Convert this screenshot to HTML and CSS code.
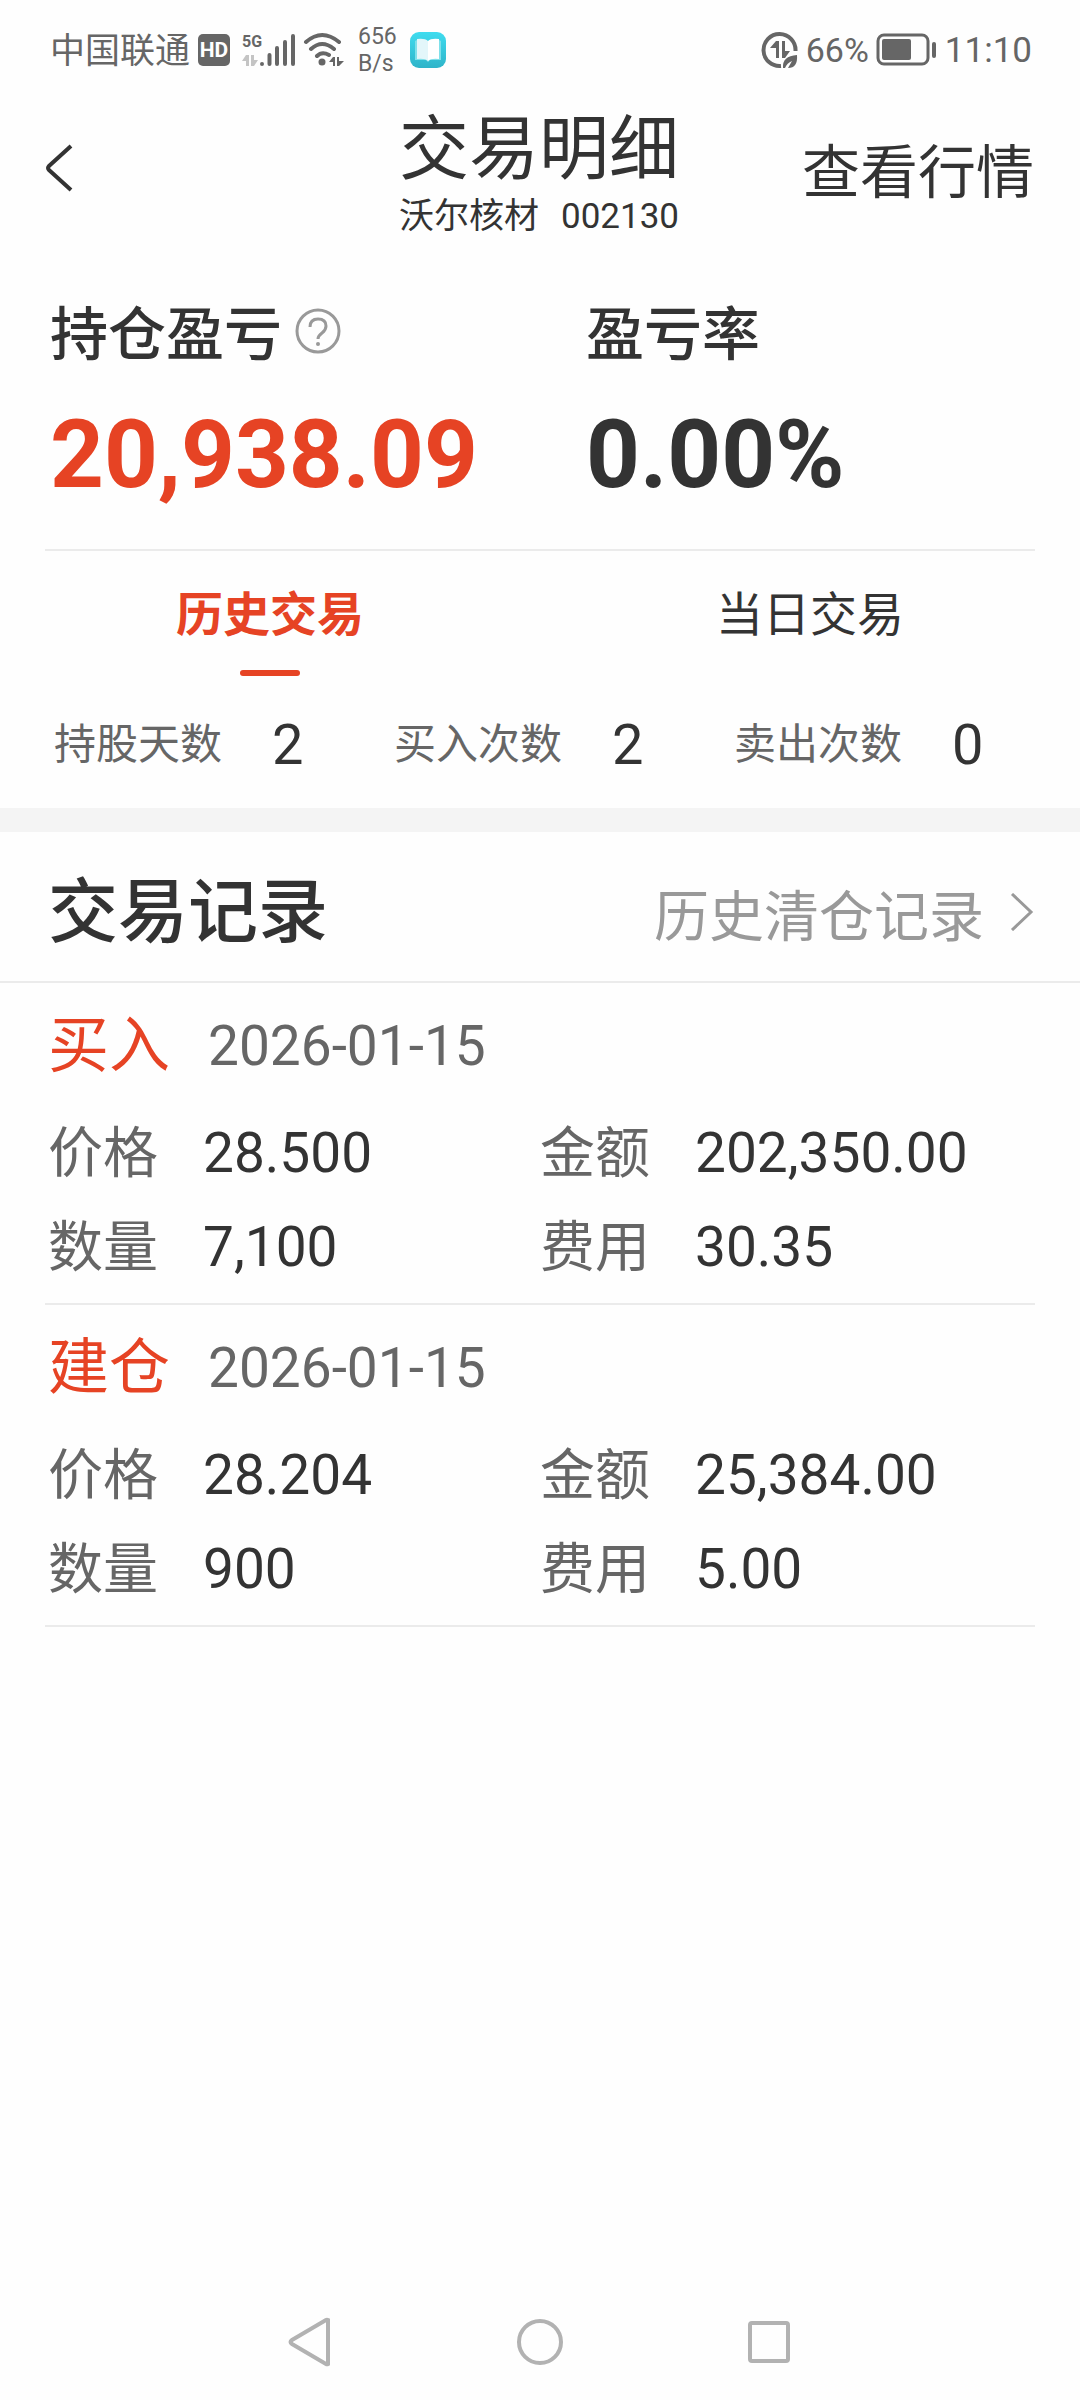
FILE: index.html
```
<!DOCTYPE html>
<html lang="zh-CN">
<head>
	<meta charset="UTF-8">
	<meta name="viewport" content="width=device-width, initial-scale=1.0">
	<title>交易明细</title>
	<link rel="stylesheet" href="styles.css">
</head>

<body>
	<div class="page">
		<!-- 状态栏 -->
		<div class="status-bar">
			<div class="status-left">
				<span class="carrier">中国联通</span>
				<span class="hd">HD</span>
				<div class="signal">
					<div class="network">
						<span>5G</span>
						<svg width="16" height="13" viewBox="0 0 16 13" fill="#c4c4c4"><path d="M4 1h3v11H4V7H0zM9 1h3v5h4l-4 6H9z"/></svg>
					</div>
					<svg width="36" height="34" viewBox="0 0 36 34" stroke="#666" stroke-width="4" stroke-linecap="round"><path d="M3 31v0M10.500 31V22M18 31V15M26 31V9M34 31V3"/></svg>
				</div>
				<svg class="wifi" width="42" height="36" viewBox="0 0 42 36" fill="none" stroke="#666" stroke-width="4" stroke-linecap="round">
					<path d="M3 10Q19-4 36 10M8 17Q19 7 31 17M14 24Q19 19 26 23"/>
					<circle cx="19" cy="30" r="3.500" fill="#666" stroke="none"/>
					<path d="M30 25h2v9h-2v-4h-4zM34 25h2v4h5l-5 5h-2z" fill="#666" stroke="none"/>
				</svg>
				<div class="speed"><span>656</span><span>B/s</span></div>
				<svg width="36" height="36" viewBox="0 0 36 36">
					<defs>
						<linearGradient id="book" x1="0" y1="0" x2="0" y2="1">
							<stop offset="0" stop-color="#3fdcef"/>
							<stop offset="1" stop-color="#2fb4c9"/>
						</linearGradient>
					</defs>
					<rect width="36" height="36" rx="9" fill="url(#book)"/>
					<path d="M5 9q1-1 3-1v18h9l1 2 1-2h9V8q2 0 3 1v19H20l-2 2-2-2H5z" fill="#7fe0ea"/>
					<path d="M7 7q8-1 11 2v20q-3-3-11-2z" fill="#e3f6fa"/>
					<path d="M29 7q-8-1-11 2v20q3-3 11-2z" fill="#fff"/>
				</svg>
			</div>
			<div class="status-right">
				<svg width="38" height="38" viewBox="0 0 38 38" fill="none" stroke="#666">
					<path d="M34.500 20A16 16 0 1 0 20 35" stroke-width="4"/>
					<path d="M15 10h3v17h-3V17H9zM21 10h3v10h5l-5 7h-3z" fill="#666" stroke="none"/>
					<path d="M22 37q-1-12 14-13 1 13-9 13l4-7q-5 2-7 7z" fill="#666" stroke="none"/>
				</svg>
				<span class="percent">66%</span>
				<svg class="battery" width="62" height="34" viewBox="0 0 62 34">
					<rect x="2" y="2" width="50" height="29" rx="6" fill="none" stroke="#666" stroke-width="3"/>
					<rect x="6" y="6" width="29" height="21" rx="2" fill="#666"/>
					<rect x="56" y="9" width="4" height="16" rx="2" fill="#666"/>
				</svg>
				<span>11:10</span>
			</div>
		</div>

		<!-- 顶部标题 -->
		<header class="header">
			<button class="back" type="button" aria-label="返回">
				<svg width="30" height="50" viewBox="0 0 30 50" fill="none" stroke="#333" stroke-width="4"><path d="M27 3L5 23q-2 2 0 4L27 47"/></svg>
			</button>
			<div class="title">
				<h1>交易明细</h1>
				<p><span>沃尔核材</span><span>002130</span></p>
			</div>
			<a class="quote" href="#quote">查看行情</a>
		</header>

		<!-- 盈亏 -->
		<section class="profit">
			<div class="profit-item">
				<h2>持仓盈亏
					<button class="help" type="button" aria-label="说明">
						<svg width="46" height="46" viewBox="0 0 46 46" fill="none" stroke="#999" stroke-width="3">
							<circle cx="23" cy="23" r="21"/>
							<path d="M15 19q0-8 8-8t8 7q0 4-4 7t-4 6"/>
							<circle cx="23" cy="36" r="2" fill="#999" stroke="none"/>
						</svg>
					</button>
				</h2>
				<strong class="up">20,938.09</strong>
			</div>
			<div class="profit-item">
				<h2>盈亏率</h2>
				<strong>0.00%</strong>
			</div>
		</section>

		<nav class="tabs">
			<button class="tab active" type="button">历史交易</button>
			<button class="tab" type="button">当日交易</button>
		</nav>

		<dl class="counts">
			<div><dt>持股天数</dt><dd>2</dd></div>
			<div><dt>买入次数</dt><dd>2</dd></div>
			<div><dt>卖出次数</dt><dd>0</dd></div>
		</dl>

		<!-- 交易记录 -->
		<section class="records">
			<div class="records-head">
				<h2>交易记录</h2>
				<a href="#history">历史清仓记录
					<svg width="24" height="38" viewBox="0 0 24 38" fill="none" stroke="#999" stroke-width="3"><path d="M2 1l19 18L2 37"/></svg>
				</a>
			</div>
			<article class="record">
				<h3><span class="up">买入</span><time datetime="2026-01-15">2026-01-15</time></h3>
				<dl>
					<dt>价格</dt><dd>28.500</dd>
					<dt>金额</dt><dd>202,350.00</dd>
					<dt>数量</dt><dd>7,100</dd>
					<dt>费用</dt><dd>30.35</dd>
				</dl>
			</article>
			<article class="record">
				<h3><span class="up">建仓</span><time datetime="2026-01-15">2026-01-15</time></h3>
				<dl>
					<dt>价格</dt><dd>28.204</dd>
					<dt>金额</dt><dd>25,384.00</dd>
					<dt>数量</dt><dd>900</dd>
					<dt>费用</dt><dd>5.00</dd>
				</dl>
			</article>
		</section>

		<!-- 系统导航键 -->
		<nav class="system-nav">
			<button type="button" aria-label="返回">
				<svg width="50" height="50" viewBox="0 0 50 50"><path d="M43 3v44a2 2 0 0 1-2 0L7 27q-3-2 0-4L41 3a2 2 0 0 1 2 0z"/></svg>
			</button>
			<button type="button" aria-label="主屏幕">
				<svg width="50" height="50" viewBox="0 0 50 50"><circle cx="25" cy="25" r="21"/></svg>
			</button>
			<button type="button" aria-label="最近任务">
				<svg width="50" height="50" viewBox="0 0 50 50"><rect x="5" y="6" width="38" height="38" rx="2"/></svg>
			</button>
		</nav>
	</div>
</body>

</html>
```
FILE: styles.css
```
* {
	box-sizing: border-box;
	margin: 0;
	padding: 0;
}
body {
	font-family: Roboto, "Noto Sans CJK SC", sans-serif;
	background: #fefefe;
	color: #333;
}
button {
	border: none;
	background: none;
	font-family: inherit;
	color: inherit;
	cursor: pointer;
}
a {
	color: inherit;
	text-decoration: none;
}
svg {
	display: block;
	flex: none;
}
.page {
	display: flex;
	flex-direction: column;
	min-height: 100vh;
}
.up {
	color: #e64324;
}

/* 状态栏 */
.status-bar {
	display: flex;
	justify-content: space-between;
	align-items: center;
	height: 100px;
	padding: 0 48px 0 50px;
	color: #666;
	font-size: 35px;
}
.status-left,
.status-right {
	display: flex;
	align-items: center;
}
.status-left {
	gap: 8px;
}
.carrier {
	padding-top: 4px;
	line-height: 40px;
}
.hd {
	width: 32px;
	border-radius: 5px;
	background: #666;
	color: #fff;
	font-size: 21px;
	font-weight: bold;
	line-height: 32px;
	text-align: center;
}
.signal {
	display: flex;
	margin-left: 4px;
}
.network {
	display: flex;
	flex-direction: column;
	gap: 3px;
	width: 17px;
	font: bold 16px/18px Roboto, sans-serif;
}
.speed {
	display: flex;
	flex-direction: column;
	margin: 0 5px;
	font-size: 23px;
	line-height: 27px;
}
.status-right {
	gap: 7px;
}
.percent {
	font-size: 34px;
}

/* 顶部标题 */
.header {
	display: grid;
	grid-template-columns: 1fr auto 1fr;
	align-items: center;
	padding: 0 46px 0 44px;
}
.back {
	justify-self: start;
	padding-bottom: 6px;
}
.title {
	padding-top: 8px;
}
.title h1 {
	font-size: 70px;
	font-weight: normal;
	line-height: 84px;
}
.title p {
	display: flex;
	justify-content: space-between;
	font-size: 35px;
	line-height: 50px;
}
.quote {
	justify-self: end;
	padding-bottom: 6px;
	font-size: 58px;
}

/* 盈亏 */
.profit {
	display: grid;
	grid-template-columns: 536px 1fr;
	margin: 0 45px;
	padding: 53px 5px 46px;
	border-bottom: 2px solid #ebebeb;
}
.profit h2 {
	display: flex;
	align-items: center;
	gap: 13px;
	font-size: 58px;
	font-weight: 500;
	line-height: 80px;
}
.help {
	padding-bottom: 8px;
}
.profit strong {
	display: block;
	margin-top: 32px;
	font-size: 94px;
	line-height: 96px;
}

/* 历史 / 当日切换 */
.tabs {
	display: flex;
}
.tab {
	display: flex;
	flex: 1;
	flex-direction: column;
	align-items: center;
	padding-top: 30px;
	font-size: 47px;
	line-height: 68px;
}
.tab::after {
	content: "";
	width: 60px;
	height: 6px;
	margin-top: 21px;
	border-radius: 3px;
}
.active {
	color: #e64324;
	font-weight: bold;
}
.active::after {
	background: #e64324;
}
.counts {
	display: grid;
	grid-template-columns: repeat(3, 1fr);
	padding: 33px 6px 27px 54px;
	border-bottom: 24px solid #f4f4f4;
}
.counts div {
	display: flex;
	align-items: center;
	gap: 50px;
	line-height: 72px;
}
.counts dt {
	color: #666;
	font-size: 42px;
}
.counts dd {
	font-size: 56px;
}

/* 交易记录 */
.records-head {
	display: flex;
	justify-content: space-between;
	align-items: center;
	height: 151px;
	padding: 0 46px 0 48px;
	border-bottom: 2px solid #ebebeb;
}
.records-head h2 {
	font-size: 70px;
	font-weight: 500;
}
.records-head a {
	display: flex;
	align-items: center;
	gap: 26px;
	padding-top: 10px;
	color: #999;
	font-size: 55px;
}
.record {
	margin: 0 45px;
	padding: 22px 3px 9px;
	border-bottom: 2px solid #ebebeb;
}
.record h3 {
	display: flex;
	align-items: center;
	gap: 38px;
	font-size: 61px;
	font-weight: normal;
	line-height: 82px;
}
.record time {
	color: #666;
	font-size: 55px;
}
.record dl {
	display: grid;
	grid-template-columns: 155px 337px 155px 1fr;
	margin-top: 19px;
	line-height: 94px;
}
.record dt {
	color: #666;
	font-size: 55px;
}
.record dd {
	font-size: 55px;
}

/* 系统导航键 */
.system-nav {
	display: flex;
	justify-content: center;
	gap: 180px;
	margin-top: auto;
	padding-bottom: 33px;
}
.system-nav svg {
	fill: none;
	stroke: #b2b2b2;
	stroke-width: 4;
}
```
